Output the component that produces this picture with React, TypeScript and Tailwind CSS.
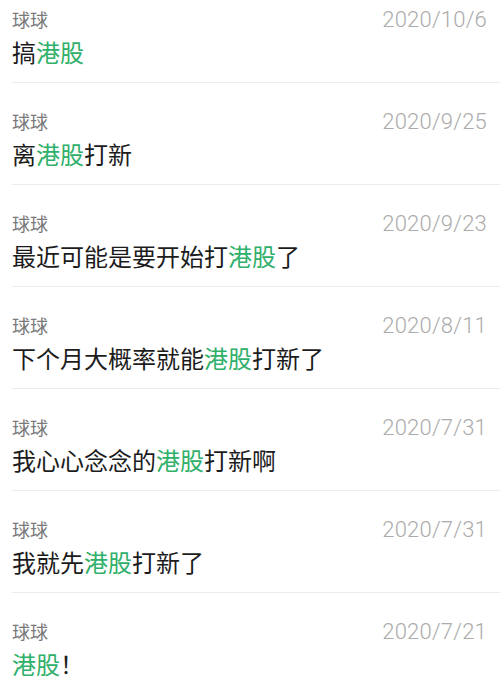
const items = [
  { date: '2020/10/6', before: '搞', after: '' },
  { date: '2020/9/25', before: '离', after: '打新' },
  { date: '2020/9/23', before: '最近可能是要开始打', after: '了' },
  { date: '2020/8/11', before: '下个月大概率就能', after: '打新了' },
  { date: '2020/7/31', before: '我心心念念的', after: '打新啊' },
  { date: '2020/7/31', before: '我就先', after: '打新了' },
  { date: '2020/7/21', before: '', after: '！' },
];

export default function App() {
  return (
    <div className="w-[500px] h-[691px] overflow-hidden bg-white font-['Noto_Sans_CJK_SC',sans-serif]">
      <ul>
        {items.map((item, i) => (
          <li key={i} className="pl-3 first:pt-[7px] pt-[26px]">
            <div className="border-b border-[#ececec] pb-[14px] pr-[13px]">
              <div className="flex items-center justify-between h-6">
                <span className="text-[18px] text-[#7a7a7a]">球球</span>
                <span className="text-[22px] font-light text-[#ababab] font-['Roboto',sans-serif] tracking-[0.2px]">
                  {item.date}
                </span>
              </div>
              <div className="mt-[5px] h-8 flex items-center text-[24px] text-[#1c1c1c] leading-8">
                <span>
                  {item.before}
                  <span className="text-[#2fb06a]">港股</span>
                  {item.after}
                </span>
              </div>
            </div>
          </li>
        ))}
      </ul>
    </div>
  );
}
